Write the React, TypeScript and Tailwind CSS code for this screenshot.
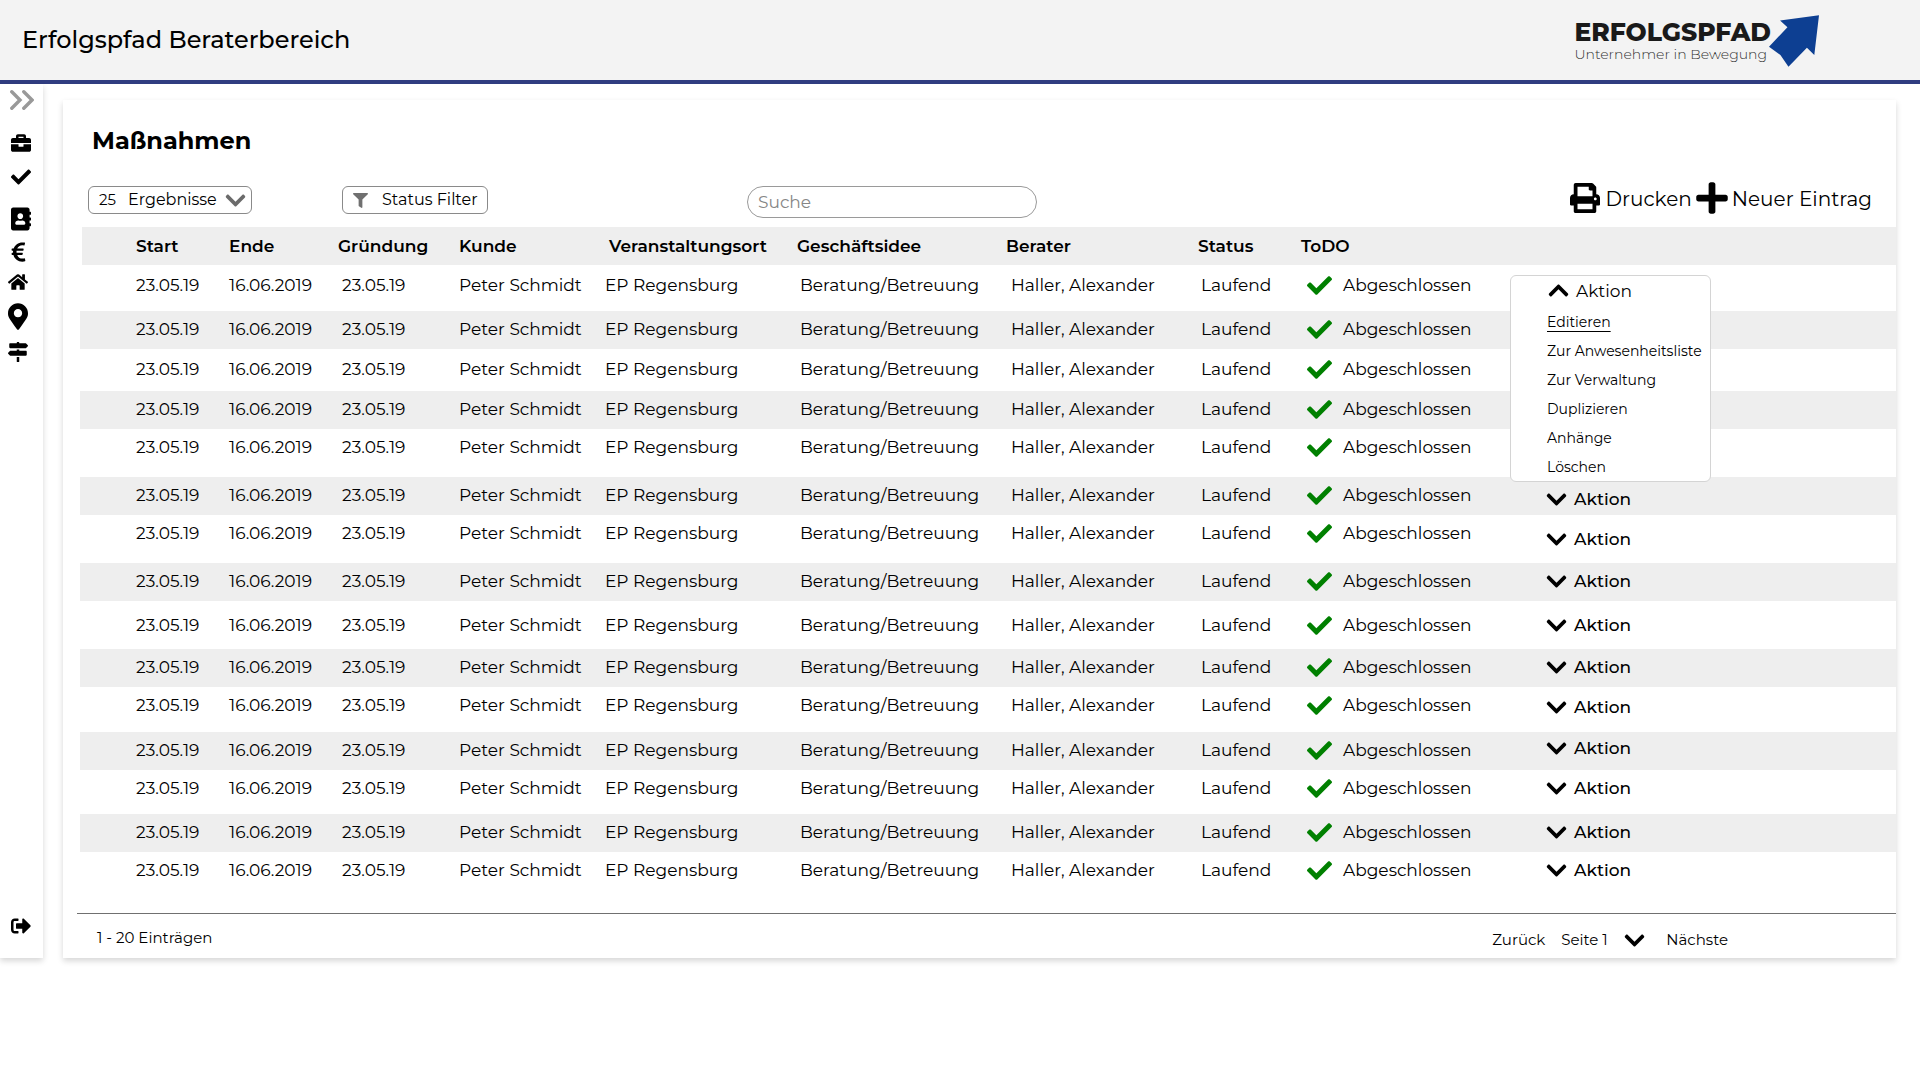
import type { ReactNode } from "react";
import {
  FaAddressBook,
  FaBriefcase,
  FaCheck,
  FaChevronDown,
  FaChevronUp,
  FaEuroSign,
  FaFilter,
  FaHome,
  FaMapMarkerAlt,
  FaMapSigns,
  FaPlus,
  FaPrint,
  FaSignOutAlt,
} from "react-icons/fa";

type Row = { row: string; cell: string; action: string; open?: boolean };

const rows: Row[] = [
  { row: "h-[46px]", cell: "pt-1.5", action: "", open: true },
  { row: "h-[38px] bg-[#eeeeee]", cell: "pt-1", action: "" },
  { row: "h-[42px]", cell: "pt-1.5", action: "" },
  { row: "h-[38px] bg-[#eeeeee]", cell: "pt-1", action: "" },
  { row: "h-[48px]", cell: "pt-1", action: "" },
  { row: "h-[38px] bg-[#eeeeee]", cell: "pt-1", action: "pt-2" },
  { row: "h-[48px]", cell: "pt-1", action: "pt-2.5" },
  { row: "h-[38px] bg-[#eeeeee]", cell: "pt-1", action: "pt-1" },
  { row: "h-[48px]", cell: "pt-2.5", action: "pt-2.5" },
  { row: "h-[38px] bg-[#eeeeee]", cell: "pt-1", action: "pt-1" },
  { row: "h-[45px]", cell: "pt-1", action: "pt-1.5" },
  { row: "h-[38px] bg-[#eeeeee]", cell: "pt-1", action: "pt-0.5" },
  { row: "h-[44px]", cell: "pt-1", action: "pt-1" },
  { row: "h-[38px] bg-[#eeeeee]", cell: "pt-1", action: "pt-1" },
  { row: "h-[61px]", cell: "pt-1", action: "pt-1" },
];

const menuItems = [
  "Editieren",
  "Zur Anwesenheitsliste",
  "Zur Verwaltung",
  "Duplizieren",
  "Anhänge",
  "Löschen",
];

function NavLink({ label, className, children }: { label: string; className: string; children: ReactNode }) {
  return (
    <a href="#" aria-label={label} className={className}>
      {children}
    </a>
  );
}

function Logo() {
  return (
    <div className="flex items-start">
      <div className="pt-[3px]">
        <div className="text-[25px] leading-7 font-extrabold text-[#1a1a1a]">ERFOLGSPFAD</div>
        <div className="text-sm leading-4 font-light text-[#333333]">Unternehmer in Bewegung</div>
      </div>
      <svg width="50" height="52" viewBox="0 0 149 154" className="-ml-0.5" aria-hidden="true">
        <path d="M33 16 149 0 135 119 113 97 58 154 34 119 0 94 55 36Z" fill="#0d3f92" />
      </svg>
    </div>
  );
}

function Sidebar() {
  return (
    <aside className="flex w-[43px] shrink-0 flex-col bg-white pt-1.5 pb-[22px] shadow-[0_3px_6px_rgba(0,0,0,0.16)]">
      <button type="button" aria-label="Menü ausklappen" className="ml-2.5 text-[#999999]">
        <svg width="24" height="20" viewBox="0 0 24 20" fill="none" stroke="currentColor" strokeWidth="3.4" strokeLinecap="round">
          <path d="M1.8 1.8 10 10l-8.2 8.2M13.8 1.8 22 10l-8.2 8.2" />
        </svg>
      </button>
      <nav className="flex flex-1 flex-col items-start text-black">
        <NavLink label="Projekte" className="mt-[23px] ml-[11px]"><FaBriefcase size={20} /></NavLink>
        <NavLink label="Aufgaben" className="mt-3.5 ml-[11px]"><FaCheck size={20} /></NavLink>
        <NavLink label="Kontakte" className="mt-5 ml-[11px]"><FaAddressBook className="h-6 w-5" /></NavLink>
        <NavLink label="Finanzen" className="mt-2.5 ml-[11px]"><FaEuroSign className="h-[22px] w-[15px]" /></NavLink>
        <NavLink label="Start" className="mt-2.5 ml-2"><FaHome className="h-[18px] w-5" /></NavLink>
        <NavLink label="Standorte" className="mt-3 ml-2"><FaMapMarkerAlt className="h-[27px] w-5" /></NavLink>
        <NavLink label="Wegweiser" className="mt-3 ml-2"><FaMapSigns size={20} /></NavLink>
        <NavLink label="Abmelden" className="mt-auto ml-[11px]"><FaSignOutAlt size={20} /></NavLink>
      </nav>
    </aside>
  );
}

function Toolbar() {
  return (
    <div className="flex h-[47px] items-start pr-6 pl-[25px]">
      <label className="mt-1.5 flex h-7 w-[164px] items-center rounded-md border border-[#8a8a8a] pl-2.5 text-base">
        <select aria-label="Anzahl" className="w-[29px] appearance-none bg-transparent text-[15px]" defaultValue="25">
          <option>25</option>
          <option>50</option>
        </select>
        <span>Ergebnisse</span>
        <FaChevronDown className="mr-1 ml-auto size-[23px] text-[#6b6b6b]" />
      </label>
      <button type="button" className="mt-1.5 ml-[90px] flex h-7 w-[146px] items-center rounded-md border border-[#8a8a8a] pl-2.5 text-base">
        <FaFilter className="mr-3.5 size-[15px] text-[#707070]" />
        Status Filter
      </button>
      <input
        type="search"
        aria-label="Suche"
        placeholder="Suche"
        className="mt-1.5 ml-[259px] h-8 w-[290px] rounded-full border border-[#9a9a9a] px-2.5 text-[17px] placeholder:text-[#868686]"
      />
      <div className="ml-auto flex items-center gap-1 text-xl leading-8">
        <button type="button" className="flex items-center gap-1.5">
          <FaPrint size={30} />
          <span className="pt-0.5">Drucken</span>
        </button>
        <button type="button" className="flex items-center gap-1">
          <FaPlus className="h-9 w-8" />
          <span className="pt-0.5">Neuer Eintrag</span>
        </button>
      </div>
    </div>
  );
}

function ActionMenu() {
  return (
    <div className="absolute top-2.5 left-0 h-[207px] w-[201px] rounded-md border border-[#d4d4d4] bg-white pl-9">
      <button type="button" className="flex h-8 items-start gap-1.5 pt-px text-[17px] leading-7">
        <FaChevronUp className="my-0.5 size-[23px]" />
        Aktion
      </button>
      <ul className="text-sm leading-[29px] whitespace-nowrap">
        {menuItems.map((item, i) => (
          <li key={item} className="h-[29px]">
            <a href="#" className={i === 0 ? "underline underline-offset-4" : ""}>{item}</a>
          </li>
        ))}
      </ul>
    </div>
  );
}

function Measures() {
  return (
    <table className="w-full table-fixed border-separate border-spacing-0 text-left text-[17px] leading-7 whitespace-nowrap">
      <colgroup>
        <col className="w-[149px]" />
        <col className="w-[109px]" />
        <col className="w-[121px]" />
        <col className="w-[146px]" />
        <col className="w-[192px]" />
        <col className="w-[209px]" />
        <col className="w-[192px]" />
        <col className="w-[103px]" />
        <col className="w-[209px]" />
        <col />
      </colgroup>
      <thead>
        <tr className="h-[38px] bg-[#eeeeee]">
          <th className="border-l-2 border-white pl-[54px] font-semibold">Start</th>
          <th className="font-semibold">Ende</th>
          <th className="font-semibold">Gründung</th>
          <th className="font-semibold">Kunde</th>
          <th className="pl-1 font-semibold">Veranstaltungsort</th>
          <th className="font-semibold">Geschäftsidee</th>
          <th className="font-semibold">Berater</th>
          <th className="font-semibold">Status</th>
          <th className="font-semibold">ToDO</th>
          <th aria-label="Aktion" />
        </tr>
      </thead>
      <tbody>
        {rows.map((r, i) => (
          <tr key={i} className={`align-top ${r.row}`}>
            <td className={`pl-14 ${r.cell}`}>23.05.19</td>
            <td className={r.cell}>16.06.2019</td>
            <td className={`pl-1 ${r.cell}`}>23.05.19</td>
            <td className={r.cell}>Peter Schmidt</td>
            <td className={r.cell}>EP Regensburg</td>
            <td className={`pl-[3px] ${r.cell}`}>Beratung/Betreuung</td>
            <td className={`pl-[5px] ${r.cell}`}>Haller, Alexander</td>
            <td className={`pl-[3px] ${r.cell}`}>Laufend</td>
            <td className={`pl-1.5 ${r.cell}`}>
              <span className="flex items-center gap-[11px]">
                <FaCheck className="size-[25px] text-[#008000]" />
                Abgeschlossen
              </span>
            </td>
            <td className={`relative pl-[35px] ${r.action}`}>
              {r.open && <ActionMenu />}
              {r.action && (
                <button type="button" className="flex items-center gap-1.5 font-medium">
                  <FaChevronDown size={23} />
                  Aktion
                </button>
              )}
            </td>
          </tr>
        ))}
      </tbody>
    </table>
  );
}

export default function App() {
  return (
    <div className="min-h-screen bg-white font-['Montserrat','Inter',sans-serif] text-black">
      <header className="flex h-21 items-start justify-between border-b-4 border-[#303d80] bg-[#f3f3f3] pt-[15px] pr-[101px] pl-[22px]">
        <h1 className="text-2xl leading-[50px] font-medium">Erfolgspfad Beraterbereich</h1>
        <Logo />
      </header>
      <div className="flex">
        <Sidebar />
        <main className="min-w-0 flex-1 pt-4 pr-6 pl-5">
          <section className="bg-white shadow-[0_3px_6px_rgba(0,0,0,0.16)]">
            <h2 className="h-20 pt-[25px] pl-[29px] text-2xl leading-8 font-bold">Maßnahmen</h2>
            <Toolbar />
            <div className="pl-[17px]">
              <Measures />
            </div>
            <footer className="ml-3.5 flex h-[45px] items-center border-t border-[#707070] pt-2 pr-[168px] pl-5 text-[15px]">
              <span className="pb-1">1 - 20 Einträgen</span>
              <button type="button" className="ml-auto">Zurück</button>
              <label className="ml-4 flex items-center gap-2.5">
                <select aria-label="Seite" className="w-[52px] appearance-none bg-transparent" defaultValue="Seite 1">
                  <option>Seite 1</option>
                  <option>Seite 2</option>
                </select>
                <FaChevronDown size={23} />
              </label>
              <button type="button" className="ml-5">Nächste</button>
            </footer>
          </section>
        </main>
      </div>
    </div>
  );
}
